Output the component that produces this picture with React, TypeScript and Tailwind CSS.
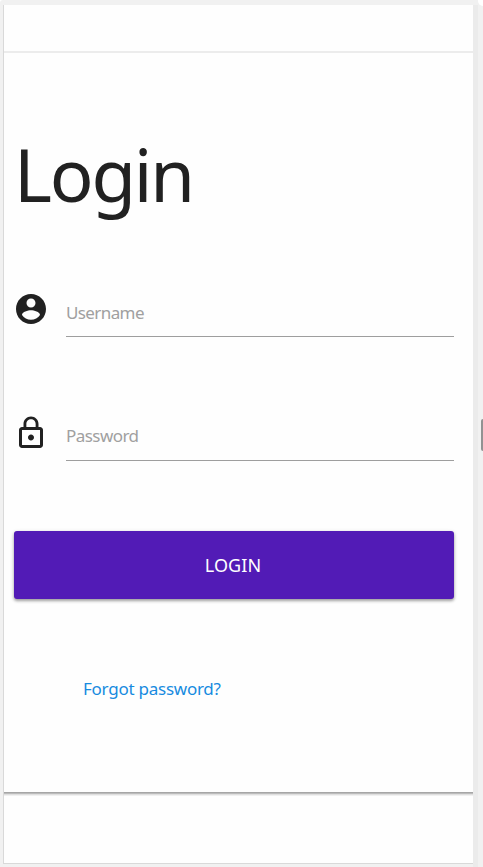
import React from 'react';

function AccountIcon() {
  return (
    <svg viewBox="0 0 24 24" className="size-9 shrink-0 fill-[#212121]" aria-hidden="true">
      <path d="M12 2C6.48 2 2 6.48 2 12s4.48 10 10 10 10-4.48 10-10S17.52 2 12 2zm0 3c1.66 0 3 1.34 3 3s-1.34 3-3 3-3-1.34-3-3 1.34-3 3-3zm0 14.2c-2.5 0-4.71-1.28-6-3.22.03-1.99 4-3.08 6-3.08 1.99 0 5.97 1.09 6 3.08-1.29 1.94-3.5 3.22-6 3.22z" />
    </svg>
  );
}

function LockIcon() {
  return (
    <svg viewBox="0 0 24 24" className="size-9 shrink-0 fill-[#212121]" aria-hidden="true">
      <path d="M12 17c1.1 0 2-.9 2-2s-.9-2-2-2-2 .9-2 2 .9 2 2 2zm6-9h-1V6c0-2.76-2.24-5-5-5S7 3.24 7 6v2H6c-1.1 0-2 .9-2 2v10c0 1.1.9 2 2 2h12c1.1 0 2-.9 2-2V10c0-1.1-.9-2-2-2zM8.900 6c0-1.710 1.390-3.100 3.100-3.100s3.100 1.390 3.100 3.100v2H8.900V6zM18 20H6V10h12v10z" />
    </svg>
  );
}

type FieldProps = {
  icon: React.ReactNode;
  type: string;
  label: string;
  className: string;
};

function Field({ icon, type, label, className }: FieldProps) {
  return (
    <label className="flex h-[46px] items-start">
      {icon}
      <input
        type={type}
        placeholder={label}
        aria-label={label}
        className={`ml-[17px] h-[46px] w-[388px] border-b border-[#9e9e9e] bg-transparent p-0 text-[17px] text-[#212121] outline-none placeholder:text-[#a0a0a0] ${className}`}
      />
    </label>
  );
}

export default function App() {
  return (
    <div className="flex h-[867px] w-[483px] overflow-hidden rounded-tl-[3px] bg-[#f1f1f1] pt-[5px] pl-[3px] font-['Noto_Sans','Open_Sans',sans-serif]">
      <main className="flex h-[859px] w-[470px] shrink-0 flex-col border-b border-l border-[#d9d9d9] bg-[#fefefe]">
        <header className="h-12 shrink-0 border-b-2 border-[#ececec]" />
        <section className="flex h-[739px] shrink-0 flex-col shadow-[0_1px_0_#a6a6a6,0_2px_0_#bbb,0_3px_0_#dfdfdf,0_4px_0_#f0f0f0]">
          <h1 className="mt-[71px] ml-[10px] h-[104px] text-[72.5px] leading-[100px] tracking-[-2.2px] text-[#212121]">Login</h1>
          <form className="ml-[10px] flex w-[440px] flex-col" onSubmit={(e) => e.preventDefault()}>
            <div className="mt-[63px] -ml-px">
              <Field icon={<AccountIcon />} type="text" label="Username" className="pb-[2px] tracking-[-0.6px]" />
            </div>
            <div className="mt-[78px] -ml-px">
              <Field icon={<LockIcon />} type="password" label="Password" className="pb-[4px] tracking-[-0.55px]" />
            </div>
            <button className="mt-[70px] h-[68px] rounded-[3px] bg-[#521bb6] pr-[2px] text-[18px] tracking-[0.1px] text-white shadow-[0_2px_3px_rgba(0,0,0,0.3),0_1px_4px_rgba(0,0,0,0.15)]">
              LOGIN
            </button>
            <a href="#" className="mt-[78px] ml-[69px] self-start text-[17px] leading-6 tracking-[-0.25px] whitespace-nowrap text-[#178be0]">
              Forgot password?
            </a>
          </form>
        </section>
      </main>
      <aside className="flex h-[862px] w-[5px] shrink-0 flex-col bg-[#ebebeb]" />
      <div className="flex flex-1 flex-col items-end">
        <div className="-mt-[5px] h-[6px] w-[5px] rounded-bl-[5px] bg-white" />
        <div className="mt-[413px] h-8 w-[2px] rounded-l-[2px] bg-[#929292]" />
      </div>
    </div>
  );
}
